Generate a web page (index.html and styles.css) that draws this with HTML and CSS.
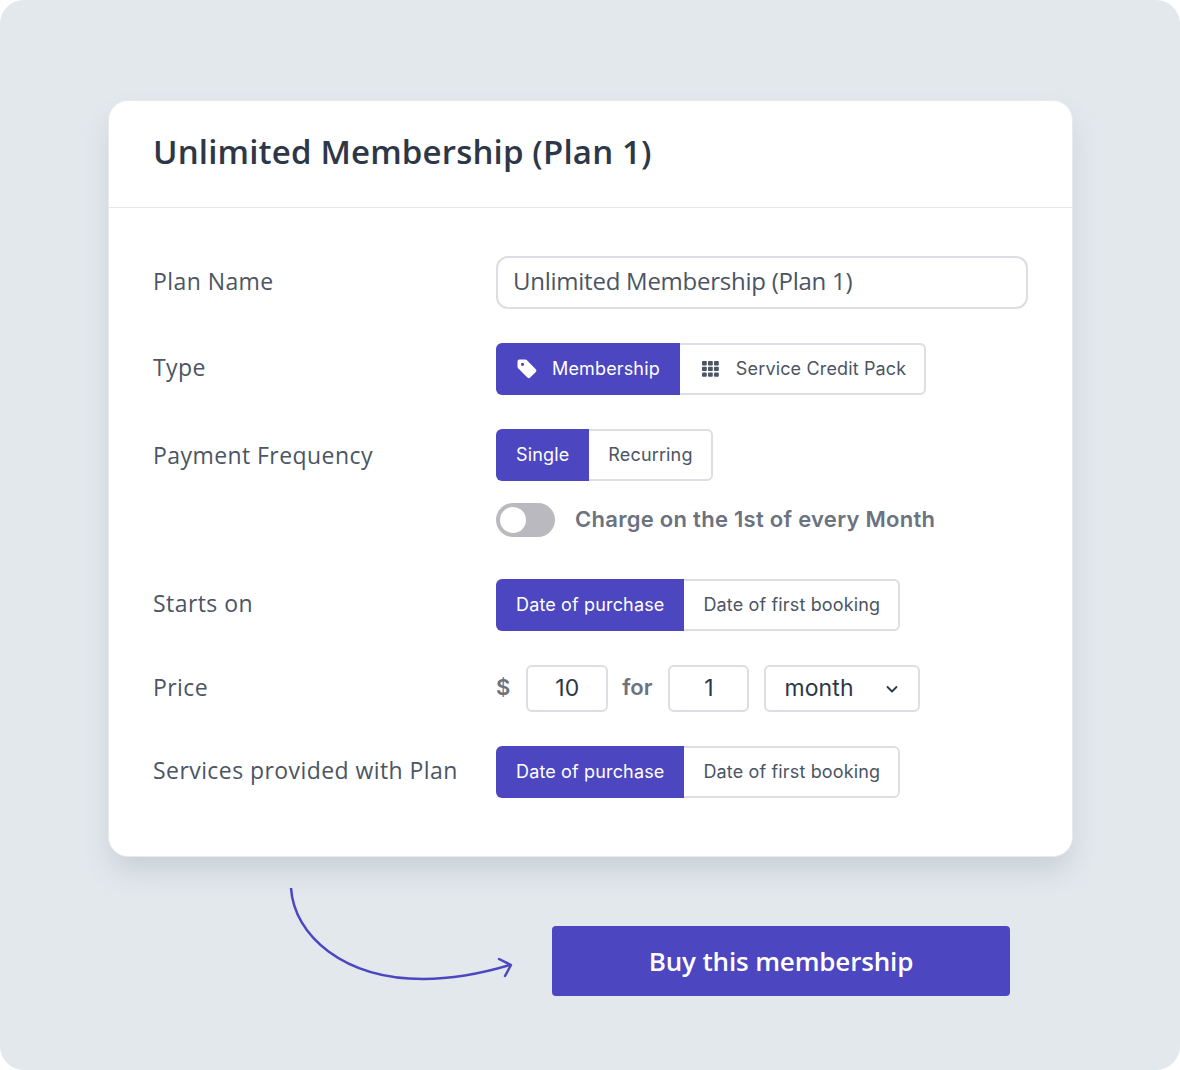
FILE: index.html
```html
<!DOCTYPE html>
<html lang="en">
<head>
<meta charset="utf-8">
<title>Unlimited Membership</title>
<link rel="stylesheet" href="styles.css">
</head>
<body>
<main class="canvas">
  <section class="card">
    <header class="card-head"><h1 class="title">Unlimited Membership (Plan 1)</h1></header>
    <div class="form">
      <div class="label">Plan Name</div>
      <div class="control"><div class="text-input">Unlimited Membership (Plan 1)</div></div>

      <div class="label">Type</div>
      <div class="control">
        <div class="seg">
          <span class="opt on opt-tag">
            <svg class="icon" width="20" height="20" viewBox="0 0 20 20"><path fill="#fff" fill-rule="evenodd" d="M2.500 .5h5.700c.6 0 1.100.2 1.500.6l9.100 9.100c.8.8.8 2 0 2.800l-5.600 5.600c-.8.8-2 .8-2.800 0L1.100 9.300C.7 8.900.5 8.400.5 7.800V2.500C.5 1.400 1.400.5 2.500.5zM5.500 3.700a1.600 1.600 0 1 0 0 3.200 1.600 1.600 0 0 0 0-3.200z"/></svg>
            Membership</span>
          <span class="opt opt-grid">
            <svg class="icon" width="17" height="16" viewBox="0 0 17 16" fill="#4b5563"><rect x="0" y="0" width="4.800" height="4.400" rx="1"/><rect x="6" y="0" width="4.800" height="4.400" rx="1"/><rect x="12" y="0" width="4.800" height="4.400" rx="1"/><rect x="0" y="5.700" width="4.800" height="4.400" rx="1"/><rect x="6" y="5.700" width="4.800" height="4.400" rx="1"/><rect x="12" y="5.700" width="4.800" height="4.400" rx="1"/><rect x="0" y="11.400" width="4.800" height="4.400" rx="1"/><rect x="6" y="11.400" width="4.800" height="4.400" rx="1"/><rect x="12" y="11.400" width="4.800" height="4.400" rx="1"/></svg>
            Service Credit Pack</span>
        </div>
      </div>

      <div class="label label-top">Payment Frequency</div>
      <div class="control stack">
        <div class="seg">
          <span class="opt on">Single</span>
          <span class="opt">Recurring</span>
        </div>
        <div class="toggle-row">
          <span class="toggle"><span class="knob"></span></span>
          <span class="toggle-text">Charge on the 1st of every Month</span>
        </div>
      </div>

      <div class="label label-gap">Starts on</div>
      <div class="control control-gap">
        <div class="seg">
          <span class="opt on">Date of purchase</span>
          <span class="opt">Date of first booking</span>
        </div>
      </div>

      <div class="label">Price</div>
      <div class="control price">
        <span class="unit unit-currency">$</span>
        <span class="box box-amount">10</span>
        <span class="unit unit-for">for</span>
        <span class="box box-count">1</span>
        <span class="box box-select">month
          <svg width="16" height="16" viewBox="0 0 16 16" fill="none" stroke="#2d3748" stroke-width="1.800" stroke-linecap="round" stroke-linejoin="round"><path d="M3.500 6l4.500 4.500L12.500 6"/></svg>
        </span>
      </div>

      <div class="label">Services provided with Plan</div>
      <div class="control">
        <div class="seg">
          <span class="opt on">Date of purchase</span>
          <span class="opt">Date of first booking</span>
        </div>
      </div>
    </div>
  </section>
  <div class="cta-row">
    <svg class="arrow" width="240" height="108" viewBox="0 0 240 108" fill="none" stroke="#4c46c0" stroke-width="2.500" stroke-linecap="butt" stroke-linejoin="round"><path d="M11 0C14 48 64 91 143 91C170 91 200 86 230 77"/><path stroke-linecap="round" d="M219 71L231 77L225 88"/></svg>
    <a class="cta">Buy this membership</a>
  </div>
</main>
</body>
</html>
```
FILE: styles.css
```css
* { box-sizing: border-box; }
html, body { margin: 0; padding: 0; background: #fff; }
.canvas {
  width: 1180px; height: 1070px;
  background: #e2e8ec;
  border-radius: 24px;
  padding: 100px 107px 0 108px;
  display: flex; flex-direction: column;
  overflow: hidden;
}
.card {
  width: 965px; height: 757px;
  background: #fff;
  border: 1px solid #e8ebee;
  border-radius: 20px;
  box-shadow: 0 16px 28px -4px rgba(100, 116, 139, .22);
}
.card-head {
  height: 107px;
  padding: 0 44px 6px;
  border-bottom: 1px solid #e5e7eb;
  display: flex; align-items: center;
}
.title {
  margin: 0;
  font: 600 33px/1 "Open Sans", sans-serif;
  letter-spacing: .17px;
  color: #2d3748;
}
.form {
  display: grid;
  grid-template-columns: 343px 532px;
  row-gap: 34px;
  padding: 49px 44px 0;
}
.label {
  font: 400 23px/1 "Open Sans", sans-serif;
  letter-spacing: .43px;
  color: #4b5563;
  display: flex; align-items: center;
  padding-bottom: 3px;
}
.label-top { align-items: flex-start; padding: 15px 0 0; }
.control { display: flex; align-items: center; }
.stack { flex-direction: column; align-items: flex-start; gap: 22px; }
.label-gap, .control-gap { margin-top: 8px; }
.text-input {
  width: 532px; height: 53px;
  margin-top: -1px;
  border: 2px solid #dddde3;
  border-radius: 12px;
  padding: 0 15px 3px;
  display: flex; align-items: center;
  font: 400 24px/1 "Open Sans", sans-serif;
  letter-spacing: -.25px;
  color: #4b5563;
}
.seg { display: flex; height: 52px; }
.opt {
  display: flex; align-items: center;
  padding: 0 18px 0 19px;
  background: #fff;
  border: 2px solid #dddde3;
  border-left-width: 0;
  border-radius: 0 6px 6px 0;
  font: 400 18px/1 Inter, sans-serif;
  letter-spacing: .15px;
  color: #4b5563;
}
.opt.on {
  background: #4c46c0;
  border: 0;
  border-radius: 6px 0 0 6px;
  color: #fff;
  padding: 0 20px;
}
.opt.opt-tag { gap: 15px; padding: 0 20px 0 21px; }
.opt.opt-grid { gap: 17px; padding: 0 18px 0 22px; }
.icon { flex: none; }
.toggle-row { display: flex; align-items: center; gap: 20px; }
.toggle {
  width: 59px; height: 34px;
  border-radius: 17px;
  background: #b9b9bf;
  padding: 4px 0 0 4px;
  display: block;
}
.knob { display: block; width: 26px; height: 26px; border-radius: 50%; background: #fff; }
.toggle-text { font: 600 22px/1 Inter, sans-serif; letter-spacing: .28px; color: #6b7280; padding-bottom: 2px; }
.price { gap: 15px; }
.unit { font: 600 22px/1 Inter, sans-serif; color: #6b7280; padding-bottom: 3px; }
.unit-currency { margin-right: 1px; }
.unit-for { margin: 0 1px 0 -1px; }
.box {
  height: 47px;
  border: 2px solid #dddde3;
  border-radius: 6px;
  display: flex; align-items: center; justify-content: center;
  font: 400 23px/1 Inter, sans-serif;
  letter-spacing: .1px;
  color: #2d3748;
}
.box-amount { width: 82px; }
.box-count { width: 81px; }
.box-select { width: 156px; justify-content: space-between; padding: 0 18px; }
.cta-row {
  display: flex; align-items: flex-start;
  margin: 31px 0 0 172px;
}
.arrow { flex: none; }
.cta {
  margin: 38px 0 0 32px;
  width: 458px; height: 70px;
  background: #4c46c0;
  border-radius: 4px;
  display: flex; align-items: center; justify-content: center;
  font: 600 26px/1 "Open Sans", sans-serif;
  letter-spacing: -.15px;
  color: #fff;
}
```
